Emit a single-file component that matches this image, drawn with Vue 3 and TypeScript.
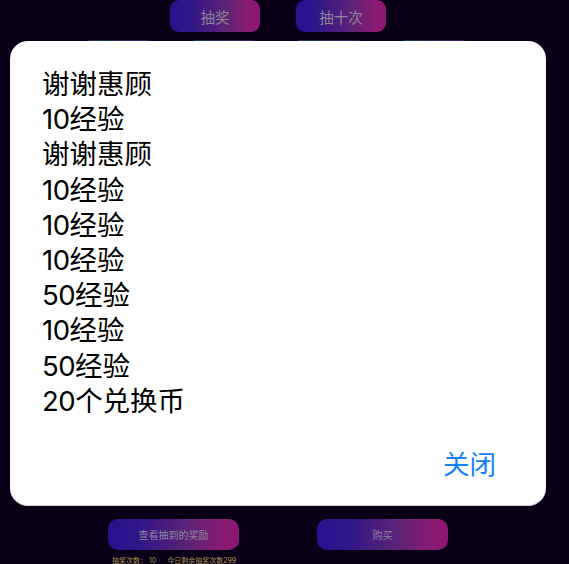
<script setup lang="ts">
interface Prize {
  num: string
  label: string
}
const prizes: Prize[] = [
  { num: '', label: '谢谢惠顾' },
  { num: '10', label: '经验' },
  { num: '', label: '谢谢惠顾' },
  { num: '10', label: '经验' },
  { num: '10', label: '经验' },
  { num: '10', label: '经验' },
  { num: '50', label: '经验' },
  { num: '10', label: '经验' },
  { num: '50', label: '经验' },
  { num: '20', label: '个兑换币' },
]
</script>

<template>
  <div class="page">
    <div class="top-row">
      <button class="btn top">抽奖</button>
      <button class="btn top">抽十次</button>
    </div>
    <div class="tiles">
      <div v-for="n in 4" :key="n" class="tile"></div>
    </div>
    <div class="spacer"></div>
    <div class="bottom-row">
      <button class="btn bottom">查看抽到的奖励</button>
      <button class="btn bottom">购买</button>
    </div>
    <div class="stats">
      <span>抽奖次数：&nbsp;10</span>
      <span>今日剩余抽奖次数299</span>
    </div>

    <div class="modal">
      <div class="list">
        <div v-for="(p, i) in prizes" :key="i"><span class="num">{{ p.num }}</span>{{ p.label }}</div>
      </div>
      <div class="actions"><span class="close">关闭</span></div>
    </div>
  </div>
</template>

<style scoped>
.page {
  position: relative;
  width: 569px;
  height: 564px;
  overflow: hidden;
  background: #090017;
  font-family: Inter, "Noto Sans CJK SC", "Noto Sans", sans-serif;
  display: flex;
  flex-direction: column;
}
.btn {
  border: 0;
  padding: 0;
  color: #8f8598;
  font-family: inherit;
  background: linear-gradient(90deg, #27138f 0%, #2f1588 22%, #5a2378 60%, #8b1a72 88%, #8b1672 100%);
  display: flex;
  align-items: center;
  justify-content: center;
}
.top-row {
  display: flex;
  gap: 36px;
  padding-left: 170px;
  height: 32px;
}
.top {
  width: 90px;
  height: 32px;
  border-radius: 9px;
  font-size: 14.5px;
}
.tiles {
  display: flex;
  gap: 33px;
  margin-top: 8px;
  padding-left: 83px;
}
.tile {
  width: 72px;
  height: 40px;
  border-radius: 8px;
  background: linear-gradient(90deg, #1a4653, #2f2464 60%, #441763);
}
.spacer {
  flex: 1;
}
.bottom-row {
  display: flex;
  gap: 78px;
  padding-left: 108px;
}
.bottom {
  width: 131px;
  height: 31px;
  border-radius: 10px;
  font-size: 10px;
}
.stats {
  display: flex;
  gap: 11px;
  height: 9px;
  margin-top: 5px;
  padding-left: 112px;
  font-size: 7px;
  line-height: 12px;
  color: #a89558;
}
.modal {
  position: absolute;
  left: 10px;
  top: 41px;
  width: 536px;
  height: 465px;
  box-sizing: border-box;
  background: #fff;
  border-radius: 18px;
  border-bottom: 1px solid #d4d4d8;
  padding: 26px 32px 0;
  color: #000;
  font-size: 27.5px;
  line-height: 35.2px;
  display: flex;
  flex-direction: column;
}
.num {
  letter-spacing: -0.5px;
}
.actions {
  display: flex;
  justify-content: flex-end;
  margin-top: 28px;
  padding-right: 18px;
}
.close {
  color: #1382fa;
  font-size: 26.5px;
}
</style>
